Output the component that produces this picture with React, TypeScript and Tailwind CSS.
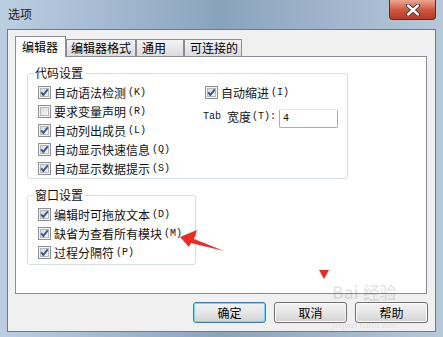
import React from "react";

const cjk = "font-['Noto_Sans_CJK_SC','Noto_Sans',sans-serif]";
const mono = "font-['Liberation_Mono','Noto_Sans_CJK_SC',monospace]";

const Check = ({ checked }: { checked: boolean }) => (
  <svg width="13" height="13" viewBox="0 0 13 13" className="shrink-0">
    <defs>
      <linearGradient id="cbg" x1="0" y1="0" x2="1" y2="1">
        <stop offset="0" stopColor="#d6d8dc" />
        <stop offset="1" stopColor="#fbfbfb" />
      </linearGradient>
    </defs>
    <rect x="0.5" y="0.5" width="12" height="12" fill="#f4f4f4" stroke="#8e8f8f" />
    <rect x="2.5" y="2.5" width="8" height="8" fill="url(#cbg)" stroke="#b4b8bf" />
    {checked && (
      <path d="M3.2 6.4 L5.3 8.9 L9.8 3.3" stroke="#3b5498" strokeWidth="1.9" fill="none" />
    )}
  </svg>
);

const Row = ({ label, k, checked = true }: { label: string; k: string; checked?: boolean }) => (
  <div className="flex items-center h-[19px]">
    <Check checked={checked} />
    <span className={`ml-[3px] text-[12px] leading-[14px] text-[#111] ${cjk}`}>{label}</span>
    <span className={`ml-[2px] text-[10px] leading-[14px] text-[#111] ${mono}`}>({k})</span>
  </div>
);

const Tab = ({ label, active, w, pl }: { label: string; active?: boolean; w: string; pl: string }) => (
  <div
    className={`${w} ${pl} ${
      active
        ? "relative z-10 h-[21px] bg-white border border-b-0 border-[#898c95] pt-[2px]"
        : "h-[17px] mb-px border border-b-0 border-[#898c95] bg-gradient-to-b from-[#f3f3f3] to-[#dcdcdc]"
    } text-[12px] leading-[16px] text-black ${cjk}`}
  >
    {label}
  </div>
);

const Button = ({ label, def }: { label: string; def?: boolean }) => (
  <div
    className={`w-[73px] h-[21px] flex items-center justify-center rounded-[3px] border text-[12px] leading-[14px] text-black ${cjk} bg-gradient-to-b from-[#f2f2f2] via-[#e6e6e6] to-[#d2d2d2] ${
      def ? "border-[#3c7fb1] shadow-[inset_0_0_0_1px_#6fd8f7]" : "border-[#707070] shadow-[inset_0_0_0_1px_#fbfbfb]"
    }`}
  >
    {label}
  </div>
);

export default function App() {
  return (
    <div className="relative w-[443px] h-[337px] overflow-hidden flex flex-col bg-gradient-to-r from-[#bccfe2] via-[#8aa3bd] to-[#b7c8d9]">
      {/* title bar */}
      <div className="h-[29px] flex justify-between shrink-0">
        <span className={`pl-2 pt-[6px] text-[12px] leading-[16px] text-[#1a1a1a] ${cjk}`}>选项</span>
        <div className="mr-[7px] w-[47px] h-[20px] rounded-b-[4px] border border-t-0 border-[#5e2a22] bg-gradient-to-b from-[#e9a793] via-[#cf5b43] to-[#b8391f] flex items-center justify-center">
          <svg width="16" height="12" viewBox="0 0 16 12">
            <path d="M3 1.5 L13 10.5 M13 1.5 L3 10.5" stroke="#3a2a2a" strokeWidth="4.2" strokeLinecap="round" />
            <path d="M3 1.5 L13 10.5 M13 1.5 L3 10.5" stroke="#ffffff" strokeWidth="2.4" strokeLinecap="round" />
          </svg>
        </div>
      </div>

      {/* client area */}
      <div className="ml-[7px] mr-[7px] mb-[5px] flex-1 flex flex-col border border-[#6b7b8c] bg-[#f0f0f0]">
        <div className="ml-[7px] mt-[6px] flex items-end h-[21px]">
          <Tab label="编辑器" active w="w-[51px]" pl="pl-[6px]" />
          <Tab label="编辑器格式" w="w-[70px]" pl="pl-[4px]" />
          <Tab label="通用" w="w-[48px]" pl="pl-[5px]" />
          <Tab label="可连接的" w="w-[58px]" pl="pl-[5px]" />
        </div>

        <div className="ml-[7px] -mt-px w-[412px] h-[238px] bg-white border border-[#898c95]">
          <fieldset className="ml-[11px] mt-[8px] w-[321px] border border-[#d5dde4] rounded-[3px] pl-[6px] pt-[2px]">
            <legend className={`px-[1px] text-[12px] leading-[16px] text-[#111] ${cjk}`}>代码设置</legend>
            <div className="flex">
              <div className="ml-[4px] w-[167px] flex flex-col">
                <Row label="自动语法检测" k="K" />
                <Row label="要求变量声明" k="R" checked={false} />
                <Row label="自动列出成员" k="L" />
                <Row label="自动显示快速信息" k="Q" />
                <Row label="自动显示数据提示" k="S" />
              </div>
              <div className="flex flex-col">
                <Row label="自动缩进" k="I" />
                <div className="mt-[7px] -ml-[2px] flex items-start">
                  <span className={`pt-[1px] text-[10px] leading-[14px] text-[#111] ${mono}`}>Tab</span>
                  <span className={`ml-[6px] pt-[1px] text-[12px] leading-[14px] text-[#111] ${cjk}`}>宽度</span>
                  <span className={`ml-[1px] pt-[1px] text-[10px] leading-[14px] text-[#111] ${mono}`}>(T):</span>
                  <div className={`ml-[3px] w-[59px] h-[19px] border border-[#abadb3] border-t-[#e3e9ef] rounded-[2px] pl-[3px] text-[10px] leading-[17px] ${mono}`}>
                    4
                  </div>
                </div>
              </div>
            </div>
          </fieldset>

          <fieldset className="ml-[11px] mt-[8px] w-[169px] border border-[#d5dde4] rounded-[3px] pl-[6px] pt-[2px] pb-[2px]">
            <legend className={`px-[1px] text-[12px] leading-[16px] text-[#111] ${cjk}`}>窗口设置</legend>
            <div className="ml-[4px] flex flex-col">
              <Row label="编辑时可拖放文本" k="D" />
              <Row label="缺省为查看所有模块" k="M" />
              <Row label="过程分隔符" k="P" />
            </div>
          </fieldset>
        </div>

        <div className="mt-[8px] mr-[7px] flex justify-end gap-[8px]">
          <Button label="确定" def />
          <Button label="取消" />
          <Button label="帮助" />
        </div>
      </div>

      {/* annotations */}
      <svg className="absolute left-0 top-0 pointer-events-none" width="443" height="337">
        <polygon points="180,237 197,230 194,239 224,251 191,243 189,247" fill="#ee2a24" />
        <polygon points="319,270 329,270 324,279" fill="#ee2a24" />
      </svg>
      <div className="absolute left-[332px] top-[283px] pointer-events-none flex flex-col items-center text-black/10">
        <span className={`text-[17px] leading-[18px] font-bold ${cjk}`}>Bai 经验</span>
        <span className="text-[8px] leading-[9px] font-['Liberation_Sans',sans-serif] mt-[20px]">jingyan.baidu.com</span>
      </div>
    </div>
  );
}
